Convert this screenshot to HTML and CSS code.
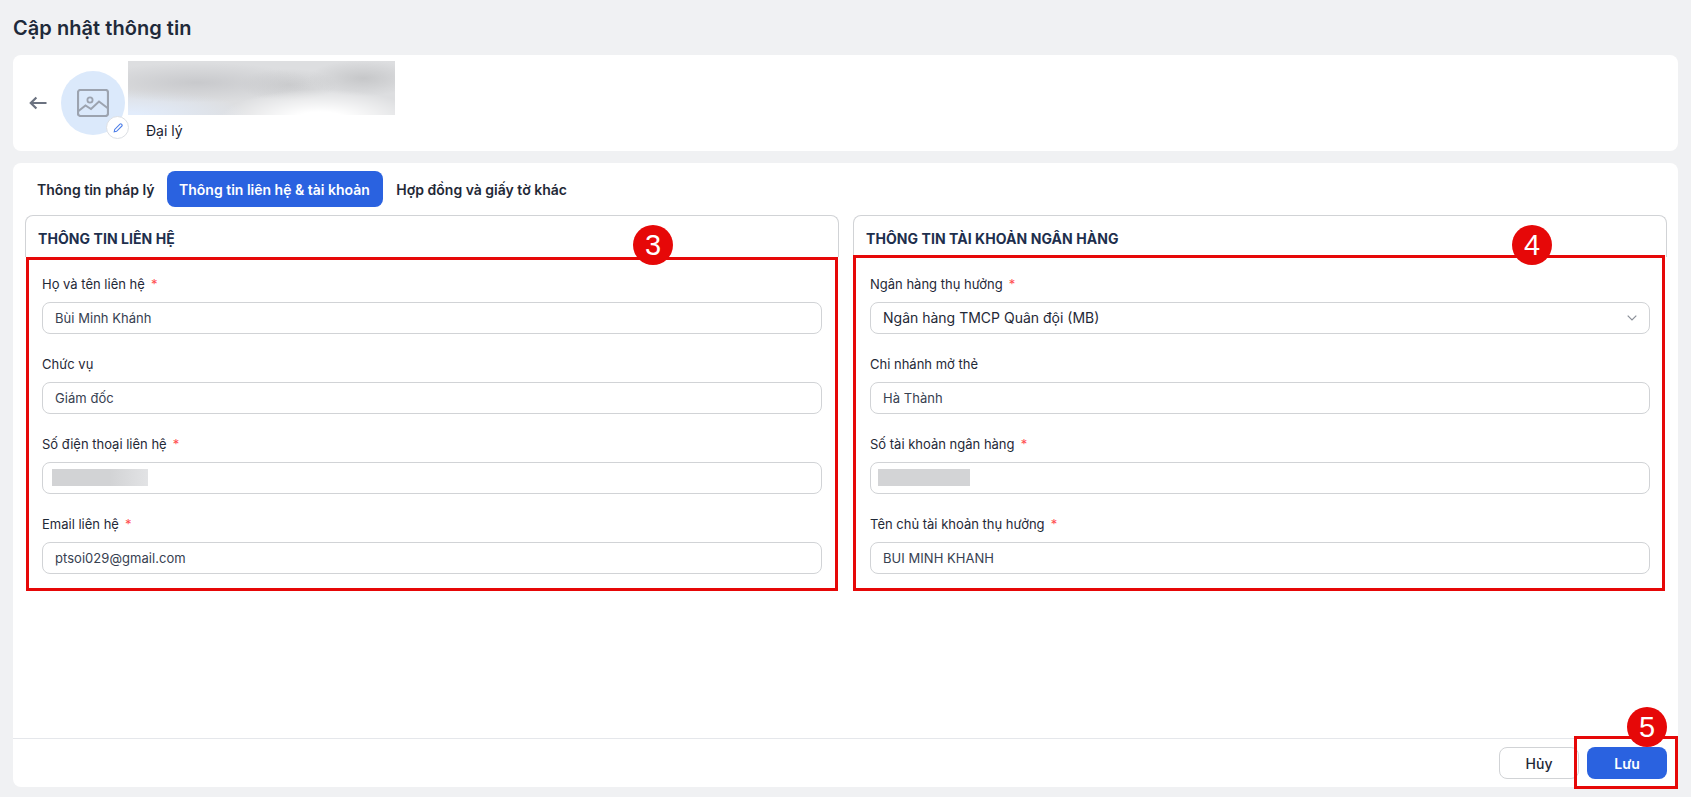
FILE: index.html
```html
<!DOCTYPE html>
<html lang="vi">
<head>
<meta charset="utf-8">
<title>Cập nhật thông tin</title>
<link rel="stylesheet" href="styles.css">
</head>
<body>
<div class="page">
  <h1 class="page-title">Cập nhật thông tin</h1>

  <section class="card profile">
    <svg class="back" viewBox="0 0 18 14" width="18" height="14" aria-hidden="true"><path d="M17.5 7H2M7.4 1.5 1.8 7l5.6 5.5" fill="none" stroke="#6b7280" stroke-width="2.2"/></svg>
    <div class="avatar">
      <svg class="avatar-icon" viewBox="0 0 32 28" width="32" height="28" aria-hidden="true">
        <rect x="1" y="1" width="30" height="26" rx="2.5" fill="none" stroke="#9ca3af" stroke-width="2.2"/>
        <circle cx="13" cy="11" r="2.6" fill="none" stroke="#9ca3af" stroke-width="1.8"/>
        <path d="M1.5 22 8.5 16.5 14 20 22 12.5 30.5 19" fill="none" stroke="#9ca3af" stroke-width="2"/>
      </svg>
      <span class="avatar-edit">
        <svg viewBox="0 0 12 12" width="12" height="12" aria-hidden="true"><path d="M2.2 9.8 2.7 7.4 8 2.1a1 1 0 0 1 1.4 0l.5.5a1 1 0 0 1 0 1.4L4.6 9.3Z" fill="none" stroke="#4f7fe8" stroke-width="1.1"/></svg>
      </span>
    </div>
    <div class="profile-info">
      <div class="blur-name"></div>
      <div class="profile-role">Đại lý</div>
    </div>
  </section>

  <section class="card content">
    <nav class="tabs">
      <span class="tab">Thông tin pháp lý</span>
      <span class="tab tab-active">Thông tin liên hệ &amp; tài khoản</span>
      <span class="tab">Hợp đồng và giấy tờ khác</span>
    </nav>

    <div class="columns">
      <div class="panel">
        <h2 class="panel-title">THÔNG TIN LIÊN HỆ</h2>
        <div class="panel-body">
          <div class="field">
            <div class="label">Họ và tên liên hệ <span class="req">*</span></div>
            <div class="input">Bùi Minh Khánh</div>
          </div>
          <div class="field">
            <div class="label">Chức vụ</div>
            <div class="input">Giám đốc</div>
          </div>
          <div class="field">
            <div class="label">Số điện thoại liên hệ <span class="req">*</span></div>
            <div class="input"><span class="mask mask-phone"></span></div>
          </div>
          <div class="field">
            <div class="label">Email liên hệ <span class="req">*</span></div>
            <div class="input">ptsoi029@gmail.com</div>
          </div>
        </div>
      </div>

      <div class="panel">
        <h2 class="panel-title">THÔNG TIN TÀI KHOẢN NGÂN HÀNG</h2>
        <div class="panel-body">
          <div class="field">
            <div class="label">Ngân hàng thụ hưởng <span class="req">*</span></div>
            <div class="input input-select">
              <span>Ngân hàng TMCP Quân đội (MB)</span>
              <svg viewBox="0 0 10 6" width="10" height="6" aria-hidden="true"><path d="M.7.7 5 5 9.3.7" fill="none" stroke="#8a8f98" stroke-width="1.2"/></svg>
            </div>
          </div>
          <div class="field">
            <div class="label">Chi nhánh mở thẻ</div>
            <div class="input">Hà Thành</div>
          </div>
          <div class="field">
            <div class="label">Số tài khoản ngân hàng <span class="req">*</span></div>
            <div class="input"><span class="mask mask-account"></span></div>
          </div>
          <div class="field">
            <div class="label">Tên chủ tài khoản thụ hưởng <span class="req">*</span></div>
            <div class="input">BUI MINH KHANH</div>
          </div>
        </div>
      </div>
    </div>

    <footer class="actions">
      <button class="btn btn-ghost" type="button">Hủy</button>
      <button class="btn btn-primary" type="button">Lưu</button>
    </footer>
  </section>
</div>

<div class="mark-box mark-box-3"></div>
<div class="mark-box mark-box-4"></div>
<div class="mark-box mark-box-5"></div>
<div class="mark-num mark-num-3">3</div>
<div class="mark-num mark-num-4">4</div>
<div class="mark-num mark-num-5">5</div>
</body>
</html>
```

FILE: styles.css
```css
* { box-sizing: border-box; }

html, body {
  margin: 0;
  height: 797px;
  overflow: hidden;
}

body {
  position: relative;
  background: #f0f1f3;
  font-family: Inter, "Noto Sans", sans-serif;
  font-size: 14px;
  color: #1f2937;
}

.page {
  display: flex;
  flex-direction: column;
  height: 797px;
  padding: 0 13px 10px;
  gap: 12px;
}

.page-title {
  margin: 0 0 -12px;
  height: 55px;
  display: flex;
  align-items: center;
  font-size: 20px;
  font-weight: 600;
  letter-spacing: 0.05px;
  color: #1f2a3a;
}

.card {
  background: #fff;
  border-radius: 8px;
}

/* profile */
.profile {
  flex: 0 0 96px;
  display: flex;
  align-items: center;
  padding-left: 16px;
}

.back { flex: none; }

.avatar {
  position: relative;
  flex: none;
  width: 64px;
  height: 64px;
  margin-left: 14px;
  border-radius: 50%;
  background: #dbe9fb;
  display: flex;
  align-items: center;
  justify-content: center;
}

.avatar-edit {
  position: absolute;
  left: 45px;
  top: 45px;
  width: 23px;
  height: 23px;
  border-radius: 50%;
  background: #fff;
  border: 1px solid #dcdfe4;
  display: flex;
  align-items: center;
  justify-content: center;
}

.profile-info {
  align-self: flex-start;
  margin-left: 3px;
  padding-top: 6px;
}

.blur-name {
  width: 267px;
  height: 54px;
  background:
    radial-gradient(ellipse 100px 30px at 72% 108%, #ffffff 25%, rgba(255, 255, 255, 0) 100%),
    radial-gradient(ellipse 55px 18px at 88% 32%, #c6c7c9 0%, rgba(198, 199, 201, 0) 100%),
    radial-gradient(ellipse 115px 20px at 26% 40%, #c8c9cc 0%, rgba(200, 201, 204, 0) 100%),
    radial-gradient(ellipse 50px 16px at 60% 44%, #cbccce 0%, rgba(203, 204, 206, 0) 100%),
    radial-gradient(ellipse 120px 26px at 0% 100%, #e2ecfb 10%, rgba(226, 236, 251, 0) 100%),
    #dddee0;
}

.profile-role {
  margin-top: 6px;
  padding-left: 18px;
  line-height: 20px;
  font-size: 14px;
  color: #1a2230;
}

/* content */
.content {
  flex: 1;
  min-height: 0;
  display: flex;
  flex-direction: column;
}

.tabs {
  display: flex;
  height: 52px;
  padding: 8px 12px;
}

.tab {
  display: flex;
  align-items: center;
  height: 36px;
  padding: 0 12.5px 0 12px;
  border-radius: 8px;
  font-size: 14px;
  font-weight: 600;
  color: #1f2937;
}

.tab-active {
  padding-right: 13.5px;
  background: #2a62e0;
  color: #fff;
}

.tab-active + .tab { padding-left: 13px; }

.columns {
  flex: 1;
  display: grid;
  grid-template-columns: 1fr 1fr;
  gap: 14px;
  padding: 0 11px 0 12px;
  align-items: start;
}

.panel-title {
  margin: 0;
  height: 42px;
  padding: 3px 12px 0;
  display: flex;
  align-items: center;
  border: 1px solid #d1d3d6;
  border-bottom: 0;
  border-radius: 8px 8px 0 0;
  font-size: 14px;
  font-weight: 700;
  letter-spacing: 0.07px;
  color: #1e2f4d;
}

.panel-body {
  padding: 17px 17px 0;
}

.field { margin-bottom: 20px; }

.label {
  height: 20px;
  margin-bottom: 8px;
  line-height: 20px;
  font-size: 13px;
  color: #1f2937;
}

.req {
  margin-left: 2.5px;
  color: #ff4d4f;
}

.input {
  height: 32px;
  padding: 0 12px 1px;
  display: flex;
  align-items: center;
  border: 1px solid #d1d3d6;
  border-radius: 8px;
  font-size: 13px;
  letter-spacing: 0.04px;
  color: #374151;
}

.input-select {
  justify-content: space-between;
  font-size: 14px;
  letter-spacing: 0;
  color: #1f2937;
}

.mask {
  display: block;
  height: 17px;
  margin-left: -3px;
  background: linear-gradient(to right, #d2d3d5 60%, #e2e3e5 100%);
}

.mask-phone { width: 96px; }
.mask-account { width: 92px; margin-left: -5px; background: #d3d4d6; }

.actions {
  flex: 0 0 49px;
  display: flex;
  justify-content: flex-end;
  align-items: center;
  gap: 8px;
  padding-right: 11px;
  border-top: 1px solid #e5e7eb;
}

.btn {
  width: 80px;
  height: 32px;
  border-radius: 8px;
  font-family: inherit;
  font-size: 14px;
  font-weight: 600;
}

.btn-ghost {
  background: #fff;
  border: 1px solid #d1d3d6;
  font-weight: 500;
  color: #1f2937;
}

.btn-primary {
  background: #2a62e0;
  border: 0;
  color: #fff;
}

/* red annotations over the screenshot */
.mark-box {
  position: absolute;
  border: 3px solid #e60808;
}

.mark-box-3 { left: 26px; top: 257px; width: 812px; height: 334px; }
.mark-box-4 { left: 853px; top: 255px; width: 812px; height: 336px; }
.mark-box-5 { left: 1574px; top: 736px; width: 104px; height: 53px; }

.mark-num {
  position: absolute;
  width: 40px;
  height: 40px;
  border-radius: 50%;
  background: #e60808;
  color: #fff;
  font-family: "Liberation Sans", Arial, sans-serif;
  font-size: 29px;
  line-height: 40px;
  text-align: center;
}

.mark-num-3 { left: 633px; top: 225px; }
.mark-num-4 { left: 1512px; top: 225px; }
.mark-num-5 { left: 1627px; top: 707px; }
```
